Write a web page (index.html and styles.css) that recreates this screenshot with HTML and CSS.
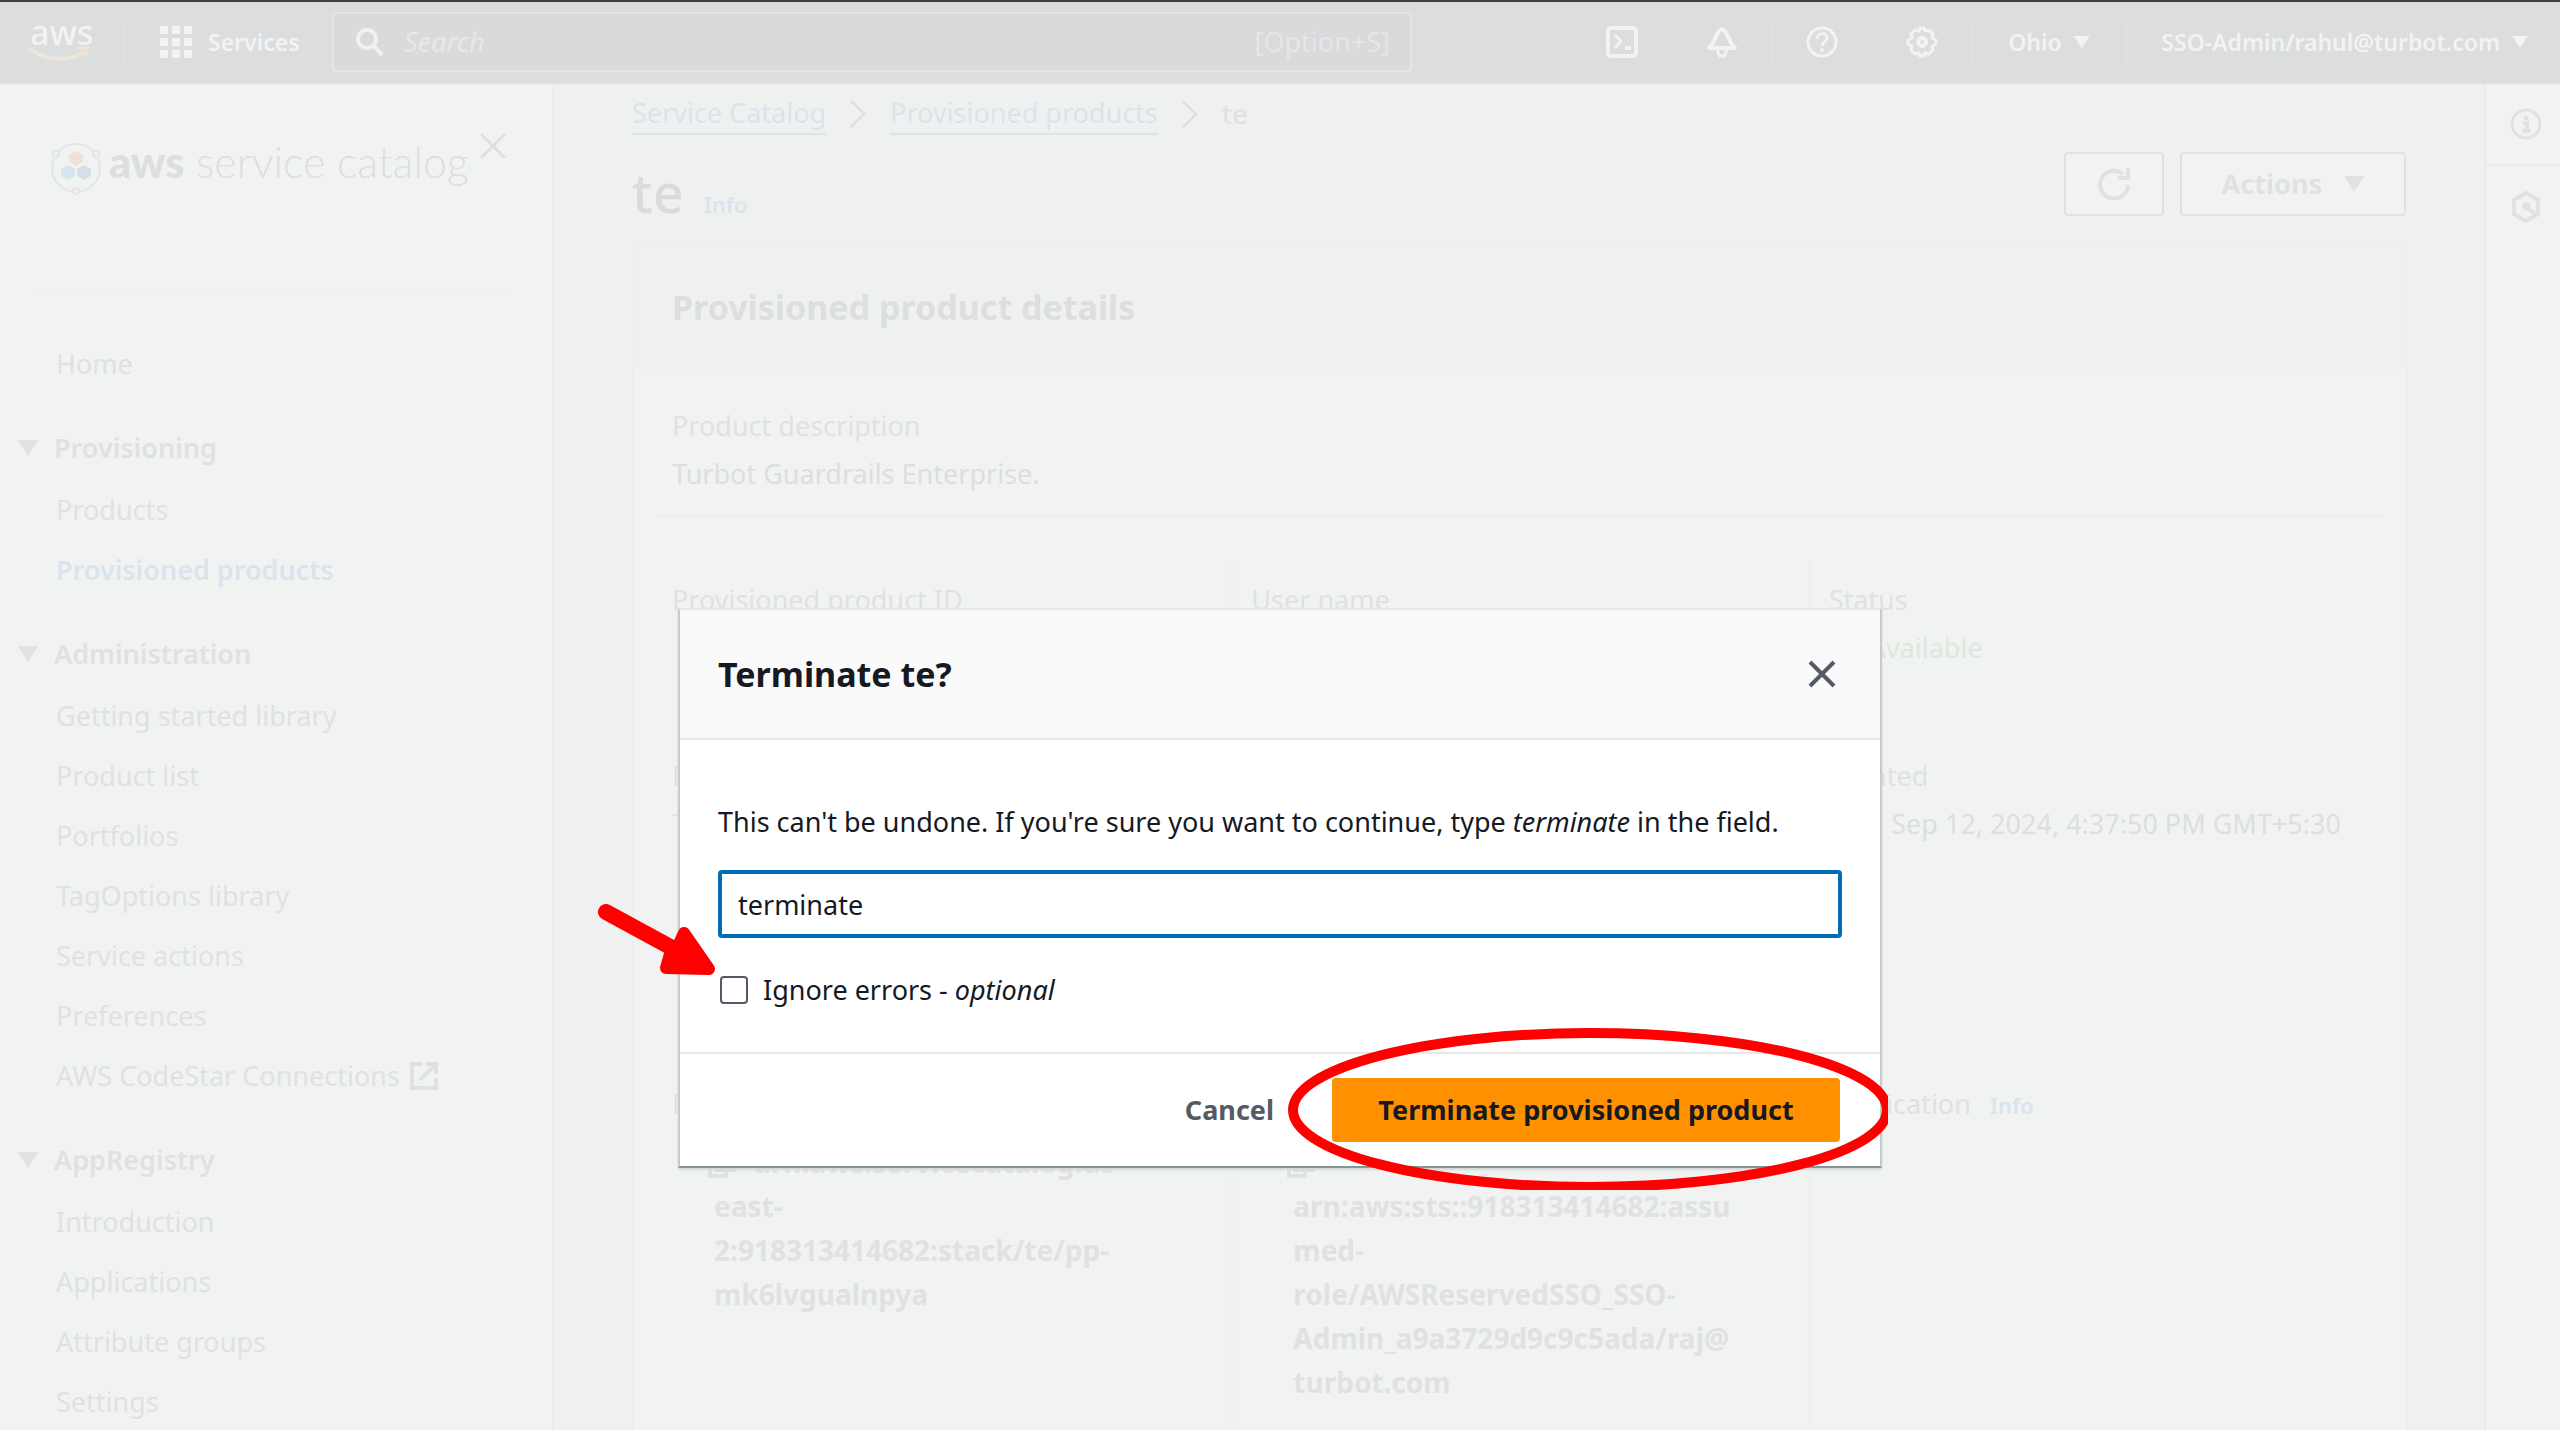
FILE: index.html
```html
<!DOCTYPE html>
<html lang="en">
<head>
<meta charset="utf-8">
<title>Terminate te? - Service Catalog</title>
<link rel="stylesheet" href="styles.css">
</head>
<body>
<header class="topnav">
  <a class="brand" href="#" aria-label="AWS home">
    <span class="brand-word">aws</span>
    <svg class="brand-smile" viewBox="0 0 62 16" fill="none" stroke="#efe4d9" stroke-width="4"><path d="M1 2C18 16 42 16 57 5"/><path d="M50 2h10l-3 9" stroke-width="3"/></svg>
  </a>
  <button class="services" type="button">
    <svg width="32" height="32" viewBox="0 0 32 32" fill="currentColor"><path d="M0 0h8v8H0zM12 0h8v8h-8zM24 0h8v8h-8zM0 12h8v8H0zM12 12h8v8h-8zM24 12h8v8h-8zM0 24h8v8H0zM12 24h8v8h-8zM24 24h8v8h-8z"/></svg>
    <span>Services</span>
  </button>
  <label class="search">
    <svg width="28" height="28" viewBox="0 0 28 28" fill="none" stroke="#f0f1f1" stroke-width="4"><circle cx="11" cy="11" r="9"/><path d="M17 17l9 10"/></svg>
    <input type="text" placeholder="Search" aria-label="Search">
    <span class="hint">[Option+S]</span>
  </label>
  <div class="nav-tools">
    <button class="tool" type="button" aria-label="CloudShell"><svg width="32" height="32" viewBox="0 0 32 32" fill="none" stroke="currentColor" stroke-width="4"><rect x="2" y="2" width="28" height="28" rx="3"/><path d="M9 9l6 6-6 7" stroke-width="3"/><path d="M19 22h6"/></svg></button>
    <button class="tool" type="button" aria-label="Notifications"><svg width="32" height="32" viewBox="0 0 32 32" fill="none" stroke="currentColor" stroke-width="4"><path d="M3 22C9 18 10 4 16 3c6 1 7 15 13 19z" stroke-linejoin="round"/><path d="M12 24v3l2 3h4l2-3v-3" stroke-width="3"/></svg></button>
    <button class="tool" type="button" aria-label="Help"><svg width="32" height="32" viewBox="0 0 32 32" fill="none" stroke="currentColor" stroke-width="3"><circle cx="16" cy="16" r="14"/><path d="M11 13c0-7 10-7 10-1 0 4-5 4-5 8M16 22v4"/></svg></button>
    <button class="tool" type="button" aria-label="Settings"><svg width="32" height="32" viewBox="0 0 32 32" fill="none" stroke="currentColor" stroke-width="4"><circle cx="16" cy="16" r="4"/><path stroke-linejoin="round" stroke-width="3" d="M14 2h4l1 3 4-1 4 4-1 4 4 2v4l-4 2 1 4-4 4-4-1-1 3h-4l-1-3-4 1-4-4 1-4-4-2v-4l4-2-1-4 4-4 4 1z"/></svg></button>
    <button class="menu region" type="button">Ohio <i class="caret small"></i></button>
    <button class="menu account" type="button">SSO-Admin/rahul@turbot.com <i class="caret small"></i></button>
  </div>
</header>

<div class="shell">
  <nav class="sidebar" aria-label="Service Catalog">
    <div class="side-head">
      <svg width="50" height="54" viewBox="0 0 50 54" fill="none" stroke="#e3e6e6" stroke-width="2"><circle cx="25" cy="27" r="24"/><g fill="#f1f3f3"><circle cx="5" cy="13" r="3"/><circle cx="45" cy="13" r="3"/><circle cx="25" cy="50" r="3"/></g><path stroke="none" fill="#f0e0d8" d="M25 10l7 4v7l-7 4-7-4v-7z"/><path stroke="none" fill="#d5e6ec" d="M17 24l7 4v7l-7 4-7-4v-7z"/><path stroke="none" fill="#d7deea" d="M33 24l7 4v7l-7 4-7-4v-7z"/></svg>
      <span class="product"><b>aws</b> service catalog</span>
      <button class="icon-btn" type="button" aria-label="Close navigation"><svg width="28" height="28" viewBox="0 0 28 28" fill="none" stroke="#dddfe1" stroke-width="3"><path d="M2 2l24 24M26 2L2 26"/></svg></button>
    </div>
    <a class="home" href="#">Home</a>
    <section>
      <h3><i class="caret"></i>Provisioning</h3>
      <ul><li><a href="#">Products</a></li><li><a class="current" href="#">Provisioned products</a></li></ul>
    </section>
    <section>
      <h3><i class="caret"></i>Administration</h3>
      <ul>
        <li><a href="#">Getting started library</a></li>
        <li><a href="#">Product list</a></li>
        <li><a href="#">Portfolios</a></li>
        <li><a href="#">TagOptions library</a></li>
        <li><a href="#">Service actions</a></li>
        <li><a href="#">Preferences</a></li>
        <li><a href="#">AWS CodeStar Connections <svg width="28" height="28" viewBox="0 0 28 28" fill="none" stroke="currentColor" stroke-width="4"><path d="M12 2H2v24h24V16"/><path d="M16 2h10v10M25 3L10 18"/></svg></a></li>
      </ul>
    </section>
    <section>
      <h3><i class="caret"></i>AppRegistry</h3>
      <ul>
        <li><a href="#">Introduction</a></li>
        <li><a href="#">Applications</a></li>
        <li><a href="#">Attribute groups</a></li>
        <li><a href="#">Settings</a></li>
      </ul>
    </section>
  </nav>

  <main class="content">
    <nav class="crumbs" aria-label="Breadcrumb">
      <a href="#">Service Catalog</a>
      <svg width="18" height="30" viewBox="0 0 18 30" fill="none" stroke="#dfe1e2" stroke-width="3"><path d="M2 2l13 13L2 28"/></svg>
      <a href="#">Provisioned products</a>
      <svg width="18" height="30" viewBox="0 0 18 30" fill="none" stroke="#dfe1e2" stroke-width="3"><path d="M2 2l13 13L2 28"/></svg>
      <span>te</span>
    </nav>
    <div class="title-row">
      <h1>te</h1><a class="info" href="#">Info</a>
      <div class="actions">
        <button class="btn" type="button" aria-label="Refresh"><svg width="32" height="32" viewBox="0 0 32 32" fill="none" stroke="currentColor" stroke-width="4"><path d="M30 17a14 14 0 1 1-5-11"/><path d="M30 0v10H20" /></svg></button>
        <button class="btn" type="button">Actions <i class="caret"></i></button>
      </div>
    </div>
    <section class="card">
      <h2>Provisioned product details</h2>
      <div class="card-body">
        <div class="field intro"><span class="label">Product description</span><span class="value">Turbot Guardrails Enterprise.</span></div>
        <div class="grid">
          <div class="field"><span class="label">Provisioned product ID</span></div>
          <div class="field"><span class="label">User name</span></div>
          <div class="field"><span class="label">Status</span><span class="value ok"><svg width="28" height="28" viewBox="0 0 28 28" fill="none" stroke="currentColor" stroke-width="4"><circle cx="14" cy="14" r="12"/><path d="M8 14l4 5 8-9"/></svg>Available</span></div>
          <div class="field"><span class="label">P</span><a class="value" href="#">T</a></div>
          <div class="field"></div>
          <div class="field"><span class="label">Created</span><span class="value">Thu, Sep 12, 2024, 4:37:50 PM GMT+5:30</span></div>
          <div class="field"><span class="label">P</span><span class="arn"><svg width="28" height="28" viewBox="0 0 28 28" fill="none" stroke="currentColor" stroke-width="4"><path d="M2 8v18h16v-6"/><path d="M8 2h18v18H8z"/></svg>arn:aws:servicecatalog:us-<br>east-<br>2:918313414682:stack/te/pp-<br>mk6lvgualnpya</span></div>
          <div class="field"><span class="label">&nbsp;</span><span class="arn"><svg width="28" height="28" viewBox="0 0 28 28" fill="none" stroke="currentColor" stroke-width="4"><path d="M2 8v18h16v-6"/><path d="M8 2h18v18H8z"/></svg><br>arn:aws:sts::918313414682:assu<br>med-<br>role/AWSReservedSSO_SSO-<br>Admin_a9a3729d9c9c5ada/raj@<br>turbot.com</span></div>
          <div class="field"><span class="label">Application <a class="info" href="#">Info</a></span></div>
        </div>
      </div>
    </section>
  </main>

  <aside class="rail">
    <button class="icon-btn" type="button" aria-label="Information"><svg width="32" height="32" viewBox="0 0 32 32" fill="none" stroke="currentColor" stroke-width="3"><circle cx="16" cy="16" r="14"/><path d="M16 8v4M13 15h4v8M12 23h9" stroke-width="4"/></svg></button>
    <button class="icon-btn" type="button" aria-label="Resources"><svg width="32" height="32" viewBox="0 0 32 32" fill="none" stroke="currentColor" stroke-width="4"><path d="M16 2l12 7v14l-12 7-12-7V9z"/><circle cx="16" cy="15" r="4" fill="currentColor" stroke="none"/><path d="M17 17l10 7"/></svg></button>
  </aside>
</div>

<div class="overlay">
  <dialog class="modal" open aria-labelledby="modal-title">
    <div class="modal-head">
      <h2 id="modal-title">Terminate te?</h2>
      <button class="icon-btn" type="button" aria-label="Close"><svg width="28" height="28" viewBox="0 0 28 28" fill="none" stroke="#545b64" stroke-width="4"><path d="M2 2l24 24M26 2L2 26"/></svg></button>
    </div>
    <div class="modal-body">
      <label for="confirm">This can't be undone. If you're sure you want to continue, type <em>terminate</em> in the field.</label>
      <input class="confirm" id="confirm" type="text" value="terminate">
      <label class="check"><input type="checkbox"><span>Ignore errors - <em>optional</em></span></label>
    </div>
    <div class="modal-foot">
      <button class="link-btn" type="button">Cancel</button>
      <button class="primary" type="button">Terminate provisioned product</button>
    </div>
    <svg class="mark-ring" viewBox="0 0 600 162" fill="none" stroke="#f00" stroke-width="10"><ellipse cx="302" cy="82" rx="297" ry="77"/></svg>
    <svg class="mark-arrow" viewBox="0 0 120 74" fill="#f00" stroke="#f00" stroke-linecap="round" stroke-linejoin="round"><path d="M8 10L76 47" stroke-width="16"/><path d="M86 31L111 67L68 66L72 52L80 44z" stroke-width="12"/></svg>
  </dialog>
</div>
</body>
</html>
```
FILE: styles.css
```css
* { box-sizing: border-box; }
body {
  margin: 0;
  height: 100vh;
  display: flex;
  flex-direction: column;
  overflow: hidden;
  position: relative;
  background: #eff1f1;
  font: 27px/44px "Noto Sans", sans-serif;
  color: #dfe1e2;
}
h1, h2, h3, ul { margin: 0; padding: 0; list-style: none; }
a { color: inherit; text-decoration: none; }
button { font: inherit; color: inherit; background: none; border: 0; padding: 0; }
svg { display: block; flex: none; }
.caret {
  display: inline-block;
  flex: none;
  width: 20px;
  height: 16px;
  background: currentColor;
  clip-path: polygon(0 0, 100% 0, 50% 100%);
}
.caret.small { width: 16px; height: 12px; }
.icon-btn { display: flex; }

/* Top navigation */
.topnav {
  flex: none;
  height: 84px;
  display: flex;
  align-items: center;
  border-top: 2px solid #3f3f41;
  border-bottom: 2px solid #e0e1e2;
  background: #dcdddf;
  color: #f2f3f3;
  font-size: 23px;
  font-weight: 600;
}
.brand {
  width: 126px;
  height: 44px;
  padding-left: 28px;
  border-right: 2px solid #dfe0e1;
}
.brand-word { display: block; height: 26px; padding-left: 2px; font-size: 34px; font-weight: 500; line-height: 24px; }
.brand-smile { width: 62px; height: 16px; }
.services { display: flex; align-items: center; gap: 16px; padding-left: 34px; width: 206px; }
.search {
  width: 1080px;
  height: 60px;
  display: flex;
  align-items: center;
  gap: 20px;
  padding: 0 20px 0 22px;
  border: 2px solid #e5e6e7;
  border-radius: 4px;
  background: #d9dadc;
  font-size: 27px;
  font-weight: 400;
}
.search input {
  flex: 1;
  min-width: 0;
  border: 0;
  padding: 0;
  background: none;
  font: inherit;
  font-style: italic;
}
.search input::placeholder { color: #e7e8e9; opacity: 1; }
.hint { color: #e5e6e7; }
.nav-tools { display: flex; align-items: center; margin-left: auto; }
.tool, .menu {
  height: 44px;
  display: flex;
  align-items: center;
  justify-content: center;
  border-right: 2px solid #dfe0e1;
}
.tool { width: 100px; }
.menu { gap: 12px; }
.region { width: 154px; }
.account { width: 433px; padding-right: 32px; justify-content: flex-end; border: 0; }

/* Page frame */
.shell { flex: 1; min-height: 0; display: flex; }
.sidebar {
  flex: none;
  width: 554px;
  overflow: hidden;
  border-right: 2px solid #ebeded;
  background: #f1f3f3;
}
.side-head {
  display: flex;
  align-items: flex-start;
  height: 210px;
  margin: 0 39px 0 31px;
  padding: 48px 6px 0 20px;
  border-bottom: 2px solid #eeefef;
}
.side-head svg { margin-top: 9px; }
.side-head .icon-btn { margin-left: auto; }
.side-head .icon-btn svg { margin-top: 0; }
.product { margin-left: 8px; font: 300 43px/60px Lato, sans-serif; color: #dcdedf; white-space: nowrap; }
.product b { font-weight: 900; }
.home { display: block; margin: 48px 0 0 56px; }
.sidebar section { margin-top: 40px; }
.sidebar h3 { display: flex; align-items: center; gap: 16px; padding-left: 18px; font-size: 27px; font-weight: 600; }
.sidebar ul { display: flex; flex-direction: column; gap: 16px; margin-top: 18px; padding-left: 56px; }
.sidebar li a { display: flex; align-items: center; gap: 10px; }
.sidebar li .current { color: #d9e4ed; font-weight: 600; }

.rail { flex: none; width: 76px; border-left: 2px solid #e9ebeb; background: #f1f3f3; }
.rail .icon-btn { width: 100%; height: 82px; padding-left: 6px; align-items: center; justify-content: center; border-bottom: 2px solid #e9ebeb; }
.rail .icon-btn:last-child { border: 0; }

/* Content */
.content { flex: 1; min-width: 0; display: flex; flex-direction: column; padding: 8px 76px 0 78px; }
.crumbs { display: flex; align-items: center; gap: 23px; height: 44px; }
.crumbs a { line-height: 40px; border-bottom: 2px solid #d9e4ed; color: #d9e4ed; }
.crumbs span { font-weight: 500; }
.title-row { display: flex; align-items: baseline; gap: 20px; height: 109px; line-height: 112px; }
.title-row h1 { font-size: 54px; font-weight: 500; color: #d9dbdd; }
.info { font-size: 22px; font-weight: 600; color: #d9e4ed; }
.actions { display: flex; align-self: flex-start; gap: 16px; margin: 16px 2px 0 auto; }
.btn {
  height: 64px;
  display: flex;
  align-items: center;
  gap: 22px;
  padding: 0 32px;
  border: 2px solid #dfe1e2;
  border-radius: 4px;
  background: #f1f3f3;
  font-weight: 700;
}
.btn:last-child { padding: 0 40px; }
.card { flex: 1; min-height: 0; display: flex; flex-direction: column; border: 2px solid #edefef; border-bottom: 0; background: #f1f3f3; }
.card > h2 {
  height: 128px;
  padding: 36px 38px;
  border-bottom: 2px solid #edefef;
  background: #eff1f1;
  font-size: 34px;
  font-weight: 700;
  line-height: 48px;
  color: #dcdee0;
}
.card-body { padding: 0 20px; }
.field { display: flex; flex-direction: column; gap: 4px; padding: 20px 18px 0; white-space: nowrap; }
.intro { height: 148px; padding-top: 35px; border-bottom: 2px solid #edefef; }
.grid { display: grid; grid-template-columns: repeat(3, 1fr); grid-template-rows: 176px 328px 400px; margin-top: 41px; }
.grid .field { border-left: 2px solid #edefef; }
.grid .field:nth-child(3n + 1) { border-color: transparent; padding-left: 16px; }
.value { color: #dcdedf; }
a.value { color: #d9e4ed; }
.ok { display: flex; align-items: center; gap: 12px; color: #dde8dc; }
.arn { margin-top: 10px; padding-left: 42px; font-size: 28px; font-weight: 700; }
.arn svg { display: inline-block; margin: 0 18px 0 -6px; vertical-align: -5px; }
.label .info { margin-left: 12px; }

/* Confirmation dialog */
.overlay {
  position: absolute;
  inset: 0;
  display: flex;
  align-items: center;
  justify-content: center;
  padding-top: 346px;
}
.modal {
  position: relative;
  inset: auto;
  width: 1204px;
  margin: 0;
  padding: 0;
  overflow: visible;
  border: 2px solid #c6caca;
  border-top-color: #e4e9e8;
  border-bottom-color: #879596;
  background: #fff;
  color: #16191f;
  box-shadow: 0 2px 2px #d5d8d8;
}
.modal-head {
  display: flex;
  align-items: center;
  justify-content: space-between;
  height: 130px;
  padding: 0 44px 0 38px;
  border-bottom: 2px solid #e4e9e8;
  background: #fafafa;
}
.modal-head h2 { font-size: 34px; font-weight: 700; }
.modal-body { display: flex; flex-direction: column; padding: 60px 38px 36px; }
.confirm {
  height: 68px;
  margin: 26px 0;
  padding: 0 16px;
  border: 4px solid #006bb6;
  border-radius: 4px;
  outline: 0;
  background: #fff;
  font: inherit;
  color: inherit;
}
.check { display: flex; align-items: center; gap: 15px; height: 52px; padding-left: 2px; }
.check input { appearance: none; width: 28px; height: 28px; margin: 0; border: 2px solid #545b64; border-radius: 4px; background: #fff; }
.modal-foot {
  display: flex;
  align-items: center;
  justify-content: flex-end;
  gap: 58px;
  height: 114px;
  padding: 0 40px;
  border-top: 2px solid #e4e9e8;
  font-weight: 700;
}
.link-btn { color: #545b64; }
.primary { width: 508px; height: 64px; border-radius: 4px; background: #ff9100; color: #16191f; }
.mark-ring, .mark-arrow { position: absolute; pointer-events: none; }
.mark-ring { width: 600px; height: 162px; right: -8px; bottom: -24px; }
.mark-arrow { width: 120px; height: 74px; left: -82px; top: 292px; }
```
